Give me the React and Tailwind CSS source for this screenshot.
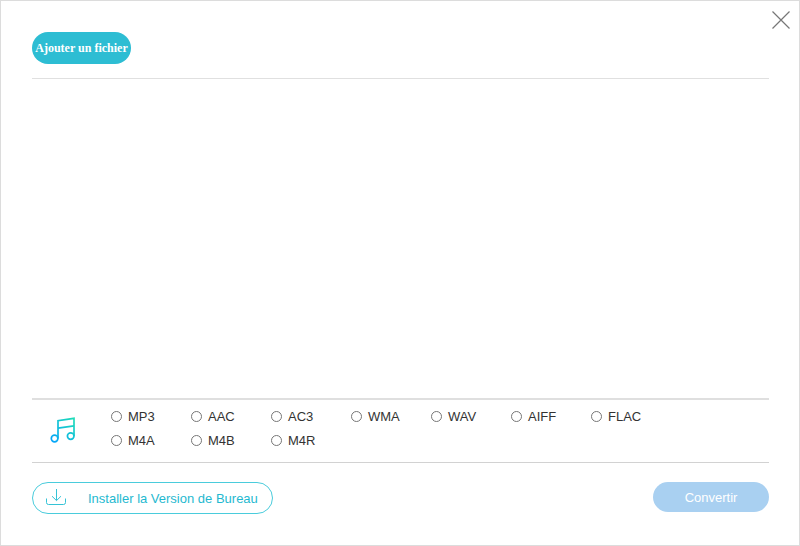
import React, { useState } from 'react';

const formats = ['MP3', 'AAC', 'AC3', 'WMA', 'WAV', 'AIFF', 'FLAC', 'M4A', 'M4B', 'M4R'];

const CloseIcon = () => (
  <svg className="w-5 h-5" viewBox="0 0 20 20" fill="none" stroke="#777777" strokeWidth="1.2">
    <path d="M1.5 1.5 18.5 18.5M18.5 1.5 1.5 18.5" />
  </svg>
);

const MusicIcon = () => (
  <svg className="w-7 h-7" viewBox="0 0 28 28" fill="none" stroke="url(#note)" strokeWidth="1.7">
    <defs>
      <linearGradient id="note" gradientUnits="userSpaceOnUse" x1="3" y1="25" x2="25" y2="3">
        <stop offset="0" stopColor="#05a4fa" />
        <stop offset="1" stopColor="#1fdcb8" />
      </linearGradient>
    </defs>
    <path d="M9 22.5V4.7L25 2.3V20" />
    <path d="M9 12.2 25 9.8" />
    <circle cx="5.6" cy="22.5" r="3.3" />
    <circle cx="21.7" cy="20.1" r="3.3" />
  </svg>
);

const DownloadIcon = () => (
  <svg className="w-5 h-5" viewBox="0 0 20 20" fill="none" stroke="#35c3d6">
    <path d="M10.5 1V12.5M6 8.2 10.5 12.6 15 8.2" />
    <path d="M.5 10.5V14.5Q.5 16.5 2.5 16.5H17.5Q19.5 16.5 19.5 14.5V10.5" />
  </svg>
);

const App = () => {
  const [format, setFormat] = useState('');

  return (
    <div className="relative min-h-screen flex flex-col bg-white border border-[#dcdcdc] pl-[31px] pr-[30px] font-['Liberation_Sans',Arial,sans-serif] text-[13px]">
      <button aria-label="Fermer" className="absolute top-[9px] right-2">
        <CloseIcon />
      </button>

      {/* Toolbar */}
      <header className="pt-[31px] pb-3.5 border-b border-[#e0e0e0]">
        <button className="block h-8 w-[99px] rounded-full bg-[#2dbdd3] text-white text-[12px] font-bold whitespace-nowrap font-['Liberation_Serif','Times_New_Roman',serif]">
          Ajouter un fichier
        </button>
      </header>

      {/* File list */}
      <main className="flex-1" />

      {/* Output formats */}
      <section className="flex items-start border-t-2 border-t-[#dfdfdf] border-b border-b-[#d2d2d2] pb-2.5">
        <div className="w-[79px] shrink-0 pt-4 pl-[17px]">
          <MusicIcon />
        </div>
        <div className="grid grid-cols-[repeat(7,80px)] pt-1">
          {formats.map((name) => (
            <label key={name} className="flex items-center h-6 text-[#333333]">
              <input
                type="radio"
                name="format"
                value={name}
                checked={format === name}
                onChange={() => setFormat(name)}
                className="appearance-none w-[11px] h-[11px] mr-1.5 rounded-full border border-[#767676] bg-white checked:border-4 checked:border-[#2dbdd3]"
              />
              <span className="pt-0.5">{name}</span>
            </label>
          ))}
        </div>
      </section>

      {/* Actions */}
      <footer className="flex items-start justify-between pt-[19px] pb-[31px]">
        <button className="flex items-center h-8 pl-[13px] pr-3.5 gap-[22px] rounded-full border border-[#4accdc] text-[#1fb9d0]">
          <DownloadIcon />
          <span className="pt-0.5">Installer la Version de Bureau</span>
        </button>
        <button className="h-[30px] w-[116px] pt-0.5 rounded-full bg-[#a9d0f1] text-white">
          Convertir
        </button>
      </footer>
    </div>
  );
};

export default App;
